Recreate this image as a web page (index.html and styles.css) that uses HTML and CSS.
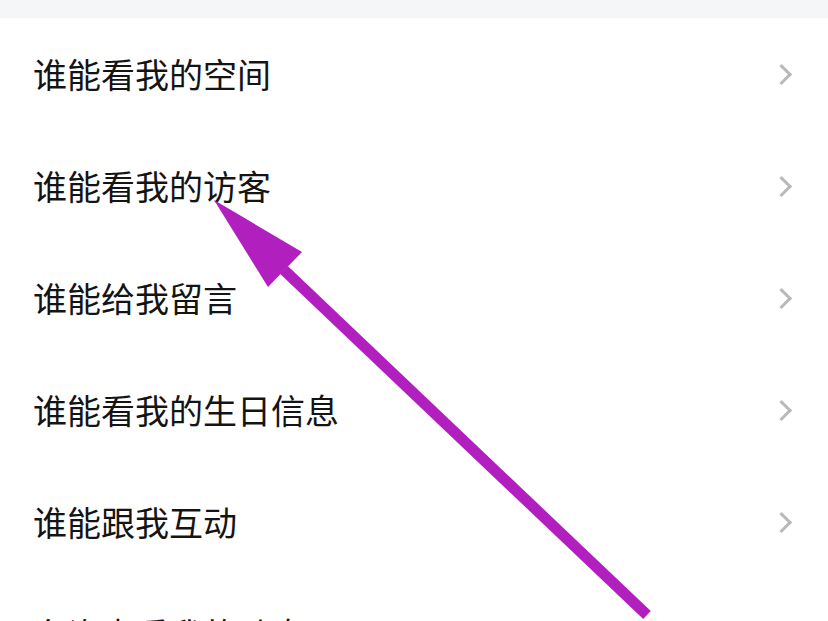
FILE: index.html
```html
<!DOCTYPE html>
<html lang="zh-CN">
<head>
<meta charset="utf-8">
<link rel="stylesheet" href="styles.css">
</head>
<body>
<div class="page">
  <div class="topbar"></div>
  <ul class="list">
    <li class="row"><span class="label">谁能看我的空间</span><span class="chev"></span></li>
    <li class="row"><span class="label">谁能看我的访客</span><span class="chev"></span></li>
    <li class="row"><span class="label">谁能给我留言</span><span class="chev"></span></li>
    <li class="row"><span class="label">谁能看我的生日信息</span><span class="chev"></span></li>
    <li class="row"><span class="label">谁能跟我互动</span><span class="chev"></span></li>
    <li class="row"><span class="label">允许查看我的动态</span><span class="chev"></span></li>
  </ul>
  <svg class="arrow" width="828" height="621" viewBox="0 0 828 621">
    <line x1="284" y1="270" x2="647" y2="615" stroke="#b21fbf" stroke-width="11"/>
    <polygon points="214,200 302,252 268,287" fill="#b21fbf"/>
  </svg>
</div>
</body>
</html>
```
FILE: styles.css
```css
html, body {
  margin: 0;
  padding: 0;
  background: #ffffff;
}
.page {
  position: relative;
  width: 828px;
  height: 621px;
  overflow: hidden;
  font-family: "Noto Sans CJK SC", "Noto Sans", sans-serif;
}
.topbar {
  height: 18px;
  background: #f5f6f8;
}
.list {
  list-style: none;
  margin: 0;
  padding: 0;
}
.row {
  height: 112px;
  display: flex;
  align-items: center;
  justify-content: space-between;
  padding: 0 35px 0 33px;
}
.label {
  font-size: 34px;
  color: #141414;
  line-height: 1;
}
.chev {
  width: 12px;
  height: 12px;
  border-top: 3px solid #b8b8b8;
  border-right: 3px solid #b8b8b8;
  transform: rotate(45deg);
  margin-right: 4px;
}
.arrow {
  position: absolute;
  left: 0;
  top: 0;
}
```
